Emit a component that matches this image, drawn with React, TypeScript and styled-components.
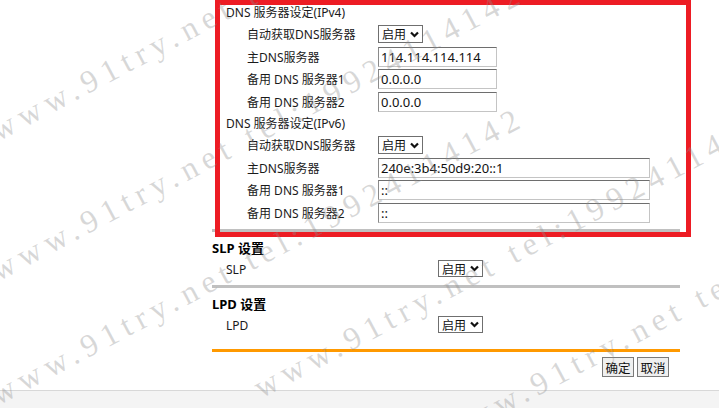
import React from 'react';
import styled, { createGlobalStyle } from 'styled-components';

const GlobalStyle = createGlobalStyle`
  html, body {
    margin: 0;
    padding: 0;
    background: #ffffff;
  }
  body {
    font-family: "Noto Sans", "Noto Sans CJK SC", sans-serif;
    color: #1a1a1a;
    font-size: 12px;
  }
`;

const Page = styled.div`
  position: relative;
  width: 719px;
  height: 408px;
  overflow: hidden;
  display: flex;
  flex-direction: column;
`;

const Column = styled.div`
  margin-left: 212px;
  width: 468px;
`;

const DnsBlock = styled.div`
  padding-top: 2px;
`;

const GroupTitle = styled.div`
  padding-left: 14px;
  height: 21px;
  line-height: 21px;
  font-size: 12px;
`;

const FieldRow = styled.div`
  display: grid;
  grid-template-columns: 131px 1fr;
  align-items: center;
  padding-left: 35px;
  height: 22.5px;
`;

const Label = styled.span`
  font-size: 12px;
  white-space: nowrap;
`;

const TextInput = styled.input<{ $wide?: boolean }>`
  box-sizing: border-box;
  display: block;
  width: ${({ $wide }) => ($wide ? '272px' : '119px')};
  height: 20px;
  margin: 0;
  padding: 0 2px;
  border: 1px solid;
  border-color: #6e6e6e #c4c4c4 #c4c4c4 #8a8a8a;
  background: #fff;
  font-family: "Noto Sans", sans-serif;
  font-size: 13px;
  color: #111;
  outline: none;
`;

const SelectBox = styled.div<{ $height?: number }>`
  box-sizing: border-box;
  display: inline-flex;
  align-items: center;
  gap: 4px;
  width: 45px;
  height: ${({ $height = 18 }) => $height}px;
  padding: 0 0 0 3px;
  border: 1px solid #6f6f6f;
  background: #fff;
  font-family: "Noto Sans CJK SC", sans-serif;
  font-size: 12px;
  line-height: 1;
  white-space: nowrap;
  color: #111;

  svg {
    flex-shrink: 0;
  }
`;

const Divider = styled.div<{ $color: string; $gap: number }>`
  height: 3px;
  margin-top: ${({ $gap }) => $gap}px;
  background: ${({ $color }) => $color};
`;

const SectionTitle = styled.div`
  margin-top: 6px;
  height: 20px;
  line-height: 20px;
  font-size: 13px;
  font-weight: 700;
  color: #000;
`;

const OptionRow = styled.div`
  display: grid;
  grid-template-columns: 212px auto;
  align-items: center;
  padding-left: 14px;
  height: 22px;
`;

const ActionBar = styled.div`
  display: flex;
  justify-content: flex-end;
  gap: 3px;
  margin-top: 5px;
  padding-right: 11px;
`;

const Button = styled.button`
  box-sizing: border-box;
  height: 20px;
  width: 32px;
  padding: 0;
  border: 1px solid #7a7a7a;
  background: #efefef;
  font-family: "Noto Sans CJK SC", sans-serif;
  font-size: 12.5px;
  color: #111;
`;

const Footer = styled.div`
  margin-top: 13px;
  flex: 1;
  border-top: 1px solid #d8d8d8;
  background: #f4f4f4;
`;

const Annotation = styled.div`
  position: absolute;
  left: 215px;
  top: 0;
  width: 476px;
  height: 237px;
  box-sizing: border-box;
  border: 5px solid #ed1c24;
  pointer-events: none;
`;

const WatermarkLayer = styled.div`
  position: absolute;
  inset: 0;
  pointer-events: none;
  overflow: hidden;
`;

const WatermarkText = styled.span`
  position: absolute;
  white-space: pre;
  font-family: "Liberation Serif", serif;
  font-size: 32px;
  line-height: 32px;
  letter-spacing: 6.5px;
  color: rgba(140, 140, 140, 0.34);
  transform: rotate(-28deg);
  transform-origin: 0 25px;
`;

const Chevron = () => (
  <svg width="9" height="7" viewBox="0 0 9 7">
    <path d="M1 1.5 L4.5 5 L8 1.5" fill="none" stroke="#111" strokeWidth="2.2" />
  </svg>
);

const Select = ({ height }: { height?: number }) => (
  <SelectBox $height={height}>
    启用
    <Chevron />
  </SelectBox>
);

type Field = { label: string; value?: string };

const DnsGroup = ({ title, fields, wide }: { title: string; fields: Field[]; wide?: boolean }) => (
  <>
    <GroupTitle>{title}</GroupTitle>
    <FieldRow>
      <Label>自动获取DNS服务器</Label>
      <div>
        <Select />
      </div>
    </FieldRow>
    {fields.map((f) => (
      <FieldRow key={f.label}>
        <Label>{f.label}</Label>
        <div>
          <TextInput $wide={wide} defaultValue={f.value} />
        </div>
      </FieldRow>
    ))}
  </>
);

const marks = [
  { x: -3, y: 140 },
  { x: -3, y: 280 },
  { x: -3, y: 404 },
  { x: 260, y: 397 },
  { x: 447, y: 442 },
];

export default function App() {
  return (
    <Page>
      <GlobalStyle />
      <Column>
        <DnsBlock>
          <DnsGroup
            title="DNS 服务器设定(IPv4)"
            fields={[
              { label: '主DNS服务器', value: '114.114.114.114' },
              { label: '备用 DNS 服务器1', value: '0.0.0.0' },
              { label: '备用 DNS 服务器2', value: '0.0.0.0' },
            ]}
          />
          <DnsGroup
            title="DNS 服务器设定(IPv6)"
            wide
            fields={[
              { label: '主DNS服务器', value: '240e:3b4:50d9:20::1' },
              { label: '备用 DNS 服务器1', value: '::' },
              { label: '备用 DNS 服务器2', value: '::' },
            ]}
          />
        </DnsBlock>
        <Divider $color="#c0c0c0" $gap={5} />

        <SectionTitle>SLP 设置</SectionTitle>
        <OptionRow>
          <Label>SLP</Label>
          <div>
            <Select height={17} />
          </div>
        </OptionRow>
        <Divider $color="#c0c0c0" $gap={5} />

        <SectionTitle>LPD 设置</SectionTitle>
        <OptionRow>
          <Label>LPD</Label>
          <div>
            <Select height={17} />
          </div>
        </OptionRow>
        <Divider $color="#ff9900" $gap={13} />

        <ActionBar>
          <Button>确定</Button>
          <Button>取消</Button>
        </ActionBar>
      </Column>
      <Footer />

      <Annotation />
      <WatermarkLayer>
        {marks.map((m, i) => (
          <WatermarkText key={i} style={{ left: m.x, top: m.y - 25 }}>
            www.91try.net tel:19924114142
          </WatermarkText>
        ))}
      </WatermarkLayer>
    </Page>
  );
}
